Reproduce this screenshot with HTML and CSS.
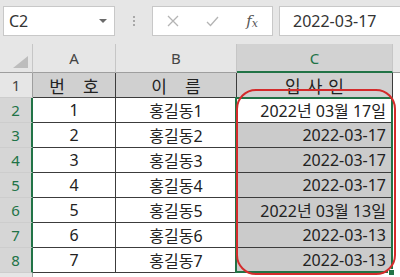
FILE: index.html
```html
<!DOCTYPE html>
<html lang="ko">
<head>
    <meta charset="UTF-8">
    <title>입사일 서식</title>
    <link rel="stylesheet" href="styles.css">
</head>
<body>
    <div class="formula-bar">
        <div class="name-box">
            <span>C2</span>
            <span class="caret"></span>
        </div>
        <div class="grip">
            <span></span><span></span><span></span>
        </div>
        <div class="fx-box">
            <span class="fx-btn">
                <svg width="12" height="12" viewBox="0 0 12 12"><path d="M1 1L11 11M11 1L1 11" stroke="#b4b4b4" stroke-width="1.3" fill="none"/></svg>
            </span>
            <span class="fx-btn">
                <svg width="13" height="11" viewBox="0 0 13 11"><path d="M1 6L4.5 9.5L12 1" stroke="#b4b4b4" stroke-width="1.3" fill="none"/></svg>
            </span>
            <span class="fx-btn fx"><i>f</i><i class="sub">x</i></span>
        </div>
        <div class="value-box">2022-03-17</div>
    </div>

    <div class="sheet">
        <div class="ch corner"><span class="tri"></span></div>
        <div class="ch">A</div>
        <div class="ch">B</div>
        <div class="ch sel">C</div>
        <div class="ch rest"></div>

        <div class="rh">1</div>
        <div class="c head"><span>번</span><span>호</span></div>
        <div class="c head"><span>이</span><span>름</span></div>
        <div class="c head tight"><span>입</span><span>사</span><span>인</span></div>
        <div class="blank"></div>

        <div class="rh sel">2</div>
        <div class="c num">1</div>
        <div class="c num">홍길동1</div>
        <div class="c date">2022년 03월 17일</div>
        <div class="blank"></div>

        <div class="rh sel">3</div>
        <div class="c num">2</div>
        <div class="c num">홍길동2</div>
        <div class="c date shade">2022-03-17</div>
        <div class="blank"></div>

        <div class="rh sel">4</div>
        <div class="c num">3</div>
        <div class="c num">홍길동3</div>
        <div class="c date shade">2022-03-17</div>
        <div class="blank"></div>

        <div class="rh sel">5</div>
        <div class="c num">4</div>
        <div class="c num">홍길동4</div>
        <div class="c date shade">2022-03-17</div>
        <div class="blank"></div>

        <div class="rh sel">6</div>
        <div class="c num">5</div>
        <div class="c num">홍길동5</div>
        <div class="c date shade">2022년 03월 13일</div>
        <div class="blank"></div>

        <div class="rh sel">7</div>
        <div class="c num">6</div>
        <div class="c num">홍길동6</div>
        <div class="c date shade">2022-03-13</div>
        <div class="blank"></div>

        <div class="rh sel">8</div>
        <div class="c num">7</div>
        <div class="c num">홍길동7</div>
        <div class="c date shade">2022-03-13</div>
        <div class="blank"></div>

        <div class="rh"></div>
        <div class="blank"></div>
        <div class="blank"></div>
        <div class="blank"></div>
        <div class="blank"></div>

        <!-- selection range C2:C8 and the hand-drawn red mark -->
        <div class="selection"></div>
        <div class="fill-handle"></div>
        <div class="marker"></div>
    </div>
</body>
</html>
```

FILE: styles.css
```css
body {
    margin: 0;
    width: 400px;
    height: 277px;
    overflow: hidden;
    background: #fff;
    font-family: "Noto Sans", "Noto Sans CJK KR", sans-serif;
    color: #222;
}

/* formula bar */
.formula-bar {
    display: flex;
    align-items: flex-start;
    height: 44px;
    padding: 6px 0 0 3px;
    box-sizing: border-box;
    background: #e6e6e6;
}
.name-box {
    display: flex;
    align-items: center;
    justify-content: space-between;
    width: 112px;
    height: 30px;
    box-sizing: border-box;
    padding: 0 7px 0 5px;
    background: #fff;
    border: 1px solid #c8c8c8;
    font-size: 16px;
    color: #333;
}
.caret {
    width: 0;
    height: 0;
    border-left: 4px solid transparent;
    border-right: 4px solid transparent;
    border-top: 4px solid #6a6a6a;
}
.grip {
    display: flex;
    flex-direction: column;
    align-items: center;
    justify-content: center;
    gap: 2px;
    width: 37px;
    height: 30px;
}
.grip span {
    width: 2px;
    height: 2px;
    background: #a8a8a8;
}
.fx-box {
    display: flex;
    width: 121px;
    height: 30px;
    box-sizing: border-box;
    background: #fff;
    border: 1px solid #c8c8c8;
}
.fx-btn {
    display: flex;
    align-items: center;
    justify-content: center;
    width: 40px;
}
.fx {
    font-family: "DejaVu Serif", "Liberation Serif", serif;
    font-size: 15px;
    color: #555;
}
.fx .sub {
    font-size: 11px;
    margin-top: 4px;
}
.value-box {
    flex: 1;
    height: 30px;
    box-sizing: border-box;
    margin-left: 6px;
    padding-left: 13px;
    background: #fff;
    border: 1px solid #c8c8c8;
    border-right: none;
    font-size: 16px;
    line-height: 28px;
    color: #333;
}

/* sheet grid */
.sheet {
    position: relative;
    display: grid;
    grid-template-columns: 33px 83px 121px 156px 1fr;
    grid-template-rows: 29px repeat(9, 25px);
    height: 233px;
    overflow: hidden;
}
.sheet > div {
    box-sizing: border-box;
}
.ch, .rh {
    display: flex;
    align-items: center;
    justify-content: center;
    background: #e6e6e6;
    font-size: 15px;
    color: #444;
}
.ch {
    border-right: 1px solid #c6c6c6;
    border-bottom: 1px solid #9e9e9e;
}
.ch.rest {
    border-right: none;
}
.ch.sel {
    background: #d2d2d2;
    color: #217346;
    border-bottom: 2px solid #217346;
}
.corner {
    justify-content: flex-end;
    align-items: flex-end;
    padding: 0 4px 4px 0;
}
.tri {
    width: 0;
    height: 0;
    border-left: 15px solid transparent;
    border-bottom: 12px solid #bdbdbd;
}
.rh {
    border-bottom: 1px solid #cdcdcd;
    border-right: 1px solid #9e9e9e;
}
.rh.sel {
    background: #d6d6d6;
    color: #217346;
    border-right: 2px solid #217346;
}
.c {
    display: flex;
    align-items: center;
    border-right: 1px solid #3c3c3c;
    border-bottom: 1px solid #3c3c3c;
    font-size: 16px;
    white-space: nowrap;
}
.c.head {
    justify-content: center;
    gap: 18px;
    background: #d0d0d0;
    font-size: 17px;
}
.c.head.tight {
    gap: 6px;
}
.c.num {
    justify-content: center;
}
.c.date {
    justify-content: flex-end;
    padding-right: 6px;
}
.c.shade {
    background: #cbcbcb;
}
.blank {
    background: #fff;
}

/* overlays */
.selection {
    position: absolute;
    left: 235px;
    top: 53px;
    width: 158px;
    height: 176px;
    border: 2px solid #217346;
    box-sizing: border-box;
    pointer-events: none;
}
.fill-handle {
    position: absolute;
    left: 388px;
    top: 225px;
    width: 7px;
    height: 7px;
    background: #217346;
    border: 1px solid #fff;
    box-sizing: border-box;
}
.marker {
    position: absolute;
    left: 236px;
    top: 45px;
    width: 160px;
    height: 186px;
    border: 2px solid #d42b2b;
    border-radius: 20px;
    box-sizing: border-box;
    pointer-events: none;
}
```
